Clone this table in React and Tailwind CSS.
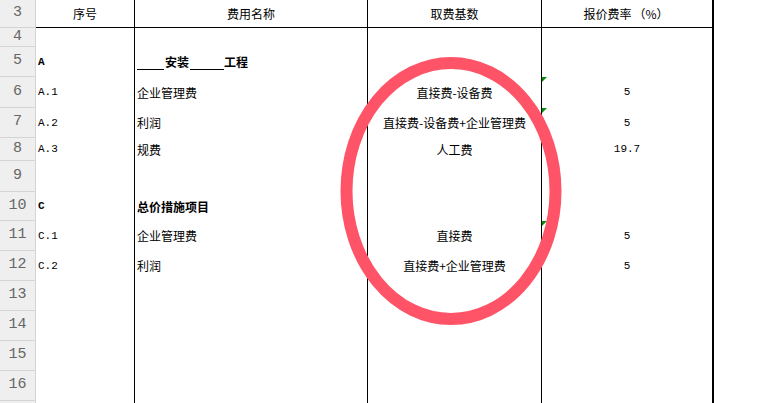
const cjk = "font-['SimSun','Noto_Sans_CJK_SC',sans-serif]";
const mono = "font-['Liberation_Mono',monospace]";

const rows = [
  { n: 4, h: "h-[19px]" },
  { n: 5, h: "h-[30px]", a: "A", title: true, bold: true },
  { n: 6, h: "h-[31px]", a: "A.1", b: "企业管理费", c: "直接费-设备费", d: "5", flag: true },
  { n: 7, h: "h-[30px]", a: "A.2", b: "利润", c: "直接费-设备费+企业管理费", d: "5", flag: true },
  { n: 8, h: "h-[23px]", a: "A.3", b: "规费", c: "人工费", d: "19.7" },
  { n: 9, h: "h-[31px]" },
  { n: 10, h: "h-[29px]", a: "C", b: "总价措施项目", bold: true },
  { n: 11, h: "h-[30px]", a: "C.1", b: "企业管理费", c: "直接费", d: "5", flag: true },
  { n: 12, h: "h-[30px]", a: "C.2", b: "利润", c: "直接费+企业管理费", d: "5" },
  { n: 13, h: "h-[30px]" },
  { n: 14, h: "h-[30px]" },
  { n: 15, h: "h-[30px]" },
  { n: 16, h: "h-[30px]" },
  { n: 17, h: "h-[30px]", hideNum: true },
];

// green "number stored as text" marker
function Flag() {
  return (
    <svg className="absolute left-0 top-0" width="5" height="5" viewBox="0 0 5 5">
      <polygon points="0,0 5,0 0,5" fill="#0a8a0a" />
    </svg>
  );
}

function Title() {
  return (
    <span className="flex items-end font-bold">
      <span className="inline-block w-[27px] border-b border-black mb-[1px]" />
      <span className="px-[1px]">安装</span>
      <span className="inline-block w-[34px] border-b border-black mb-[1px]" />
      <span>工程</span>
    </span>
  );
}

function Row({ r }) {
  return (
    <div className={`flex ${r.h}`}>
      <div className={`w-[36px] shrink-0 flex items-center justify-center bg-[#efefef] border-r border-b border-[#d4d4d4] text-[15px] text-[#666] ${mono}`}>
        {r.hideNum ? "" : r.n}
      </div>
      <div className={`w-[99px] shrink-0 border-r border-black flex items-center pl-[2px] text-[11px] ${mono} ${r.bold ? "font-bold" : ""}`}>
        {r.a}
      </div>
      <div className={`w-[233px] shrink-0 border-r border-black flex items-center pl-[2px] text-[12px] ${cjk} ${r.bold ? "font-bold" : ""}`}>
        {r.title ? <Title /> : r.b}
      </div>
      <div className={`w-[174px] shrink-0 border-r border-black flex items-center justify-center text-[12px] ${cjk}`}>
        {r.c}
      </div>
      <div className={`relative w-[172px] shrink-0 border-r-2 border-black flex items-center justify-center text-[11px] ${mono}`}>
        {r.flag && <Flag />}
        {r.d}
      </div>
      <div className="flex-1" />
    </div>
  );
}

export default function App() {
  return (
    <div className="relative w-[783px] h-[403px] overflow-hidden bg-white text-black">
      {/* header row */}
      <div className={`flex h-[28px] text-[12px] ${cjk}`}>
        <div className={`w-[36px] shrink-0 flex items-center justify-center bg-[#efefef] border-r border-b border-[#d4d4d4] text-[15px] text-[#666] ${mono}`}>
          3
        </div>
        <div className="w-[99px] shrink-0 border-r border-b border-black flex items-center justify-center">序号</div>
        <div className="w-[233px] shrink-0 border-r border-b border-black flex items-center justify-center">费用名称</div>
        <div className="w-[174px] shrink-0 border-r border-b border-black flex items-center justify-center">取费基数</div>
        <div className="w-[172px] shrink-0 border-r-2 border-b border-black flex items-center justify-center">
          报价费率<span className="px-[2px]">（%）</span>
        </div>
        <div className="flex-1" />
      </div>

      {rows.map((r) => (
        <Row key={r.n} r={r} />
      ))}

      {/* red annotation circle */}
      <svg className="absolute left-[340px] top-[57px] pointer-events-none" width="222" height="268" viewBox="0 0 222 268">
        <ellipse cx="111" cy="134" rx="104.5" ry="128" fill="none" stroke="#ff5468" strokeWidth="12" />
      </svg>
    </div>
  );
}
